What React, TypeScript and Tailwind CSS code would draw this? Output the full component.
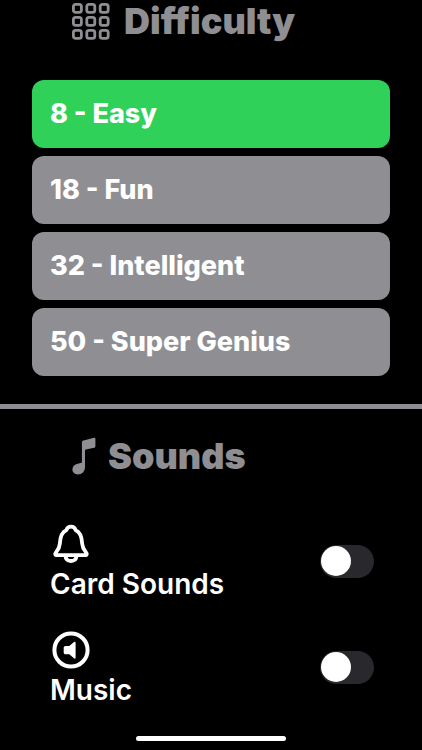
import React, { useState } from 'react';

const LEVELS = [
    { pairs: 8, name: 'Easy' },
    { pairs: 18, name: 'Fun' },
    { pairs: 32, name: 'Intelligent' },
    { pairs: 50, name: 'Super Genius' },
];

const GRID_STEPS = [0, 13, 26];

const GridIcon: React.FC = () => (
    <svg width="38" height="37" viewBox="0 0 38 37" fill="none" stroke="currentColor" strokeWidth="2.8" aria-hidden="true">
        {GRID_STEPS.map((y) =>
            GRID_STEPS.map((x) => (
                <rect key={`${x}-${y}`} x={x * 1.03 + 1.4} y={y + 1.4} width="8" height="8" rx="2.2" />
            ))
        )}
    </svg>
);

const NoteIcon: React.FC = () => (
    <svg width="24" height="38" viewBox="0 0 24 38" fill="currentColor" aria-hidden="true">
        <path d="M22 .7c.8-.2 1.4.3 1.4 1.1v7.4c0 .8-.5 1.4-1.3 1.6l-8.2 1.8c-.6.1-.9.5-.9 1.1V30c0 4.5-3 7.4-7.2 7.4C2.6 37.4.4 35.4.4 32.5c0-3 2-5.1 5.4-5.8l2.6-.6c1-.2 1.500-.7 1.500-1.7V5.300c0-1 .6-1.7 1.6-1.9z" />
    </svg>
);

const BellIcon: React.FC = () => (
    <svg width="38" height="40" viewBox="0 0 38 40" fill="none" stroke="currentColor" strokeWidth="3.8" strokeLinejoin="round" aria-hidden="true">
        <path d="M4.6 31.200h28.800c1.300 0 1.800-1.200 1-2.200-2.300-2.900-3.900-4.600-4.200-9.200-.4-7.500-1.900-11.800-6.500-13.600C23 3.900 21.300 2.600 19 2.600s-4 1.300-4.700 3.600C9.700 8 8.200 12.300 7.800 19.800 7.500 24.400 5.900 26.100 3.600 29c-.8 1-.3 2.200 1 2.200z" />
        <path d="M13.400 31.500c.2 3.500 2.400 5.500 5.600 5.500s5.400-2 5.600-5.500" />
    </svg>
);

const SpeakerIcon: React.FC = () => (
    <svg width="38" height="38" viewBox="0 0 38 38" aria-hidden="true">
        <circle cx="19" cy="19" r="16.6" fill="none" stroke="currentColor" strokeWidth="4" />
        <path d="M22 11c.8-.6 1.600-.3 1.600.7v15c0 1-.8 1.300-1.600.6l-4.700-4.100h-3.700c-1.200 0-1.900-.7-1.900-1.800v-4.500c0-1.100.7-1.800 1.900-1.800h3.700z" fill="currentColor" />
    </svg>
);

interface ToggleRowProps {
    id: string;
    label: string;
    icon: React.ReactNode;
    checked: boolean;
    onChange: (value: boolean) => void;
}

const ToggleRow: React.FC<ToggleRowProps> = ({ id, label, icon, checked, onChange }) => (
    <div className="flex items-center justify-between">
        <label htmlFor={id} className="flex flex-col text-[28px] leading-10 font-semibold text-white">
            <span className="ml-0.5 flex h-10 items-center">{icon}</span>
            {label}
        </label>
        <input
            id={id}
            type="checkbox"
            role="switch"
            checked={checked}
            onChange={(e) => onChange(e.target.checked)}
            className="mb-1.5 flex h-[33px] w-[54px] shrink-0 cursor-pointer appearance-none items-center rounded-full bg-[#29282d] p-px before:block before:size-[30px] before:rounded-full before:bg-white before:transition-transform checked:bg-[#30d158] checked:before:translate-x-5"
        />
    </div>
);

export default function App() {
    const [level, setLevel] = useState(8);
    const [cardSounds, setCardSounds] = useState(false);
    const [music, setMusic] = useState(false);

    return (
        <main className="flex min-h-screen flex-col bg-black font-['Inter','Liberation_Sans',sans-serif]">
            {/* Difficulty */}
            <section className="px-8 pb-7">
                <h2 className="flex h-[42px] items-center gap-3.5 pl-10 text-[36px] leading-10 font-black text-[#8e8e93]">
                    <GridIcon />
                    Difficulty
                </h2>
                <div className="mt-[38px] flex flex-col gap-2">
                    {LEVELS.map(({ pairs, name }) => (
                        <button
                            key={pairs}
                            type="button"
                            aria-pressed={level === pairs}
                            onClick={() => setLevel(pairs)}
                            className={`h-[68px] cursor-pointer rounded-xl px-[18px] text-left text-[27px] font-extrabold text-white ${
                                level === pairs ? 'bg-[#30d158]' : 'bg-[#8e8e93]'
                            }`}
                        >
                            {pairs} - {name}
                        </button>
                    ))}
                </div>
            </section>

            <hr className="h-[5px] border-0 bg-[#8e8e93]" />

            {/* Sounds */}
            <section className="pt-[27px]">
                <h2 className="flex h-10 items-center gap-3 pl-[72px] text-[36px] leading-10 font-black text-[#8e8e93]">
                    <NoteIcon />
                    Sounds
                </h2>
                <div className="mt-12 flex flex-col gap-[26px] pr-12 pl-[50px]">
                    <ToggleRow id="card-sounds" label="Card Sounds" icon={<BellIcon />} checked={cardSounds} onChange={setCardSounds} />
                    <ToggleRow id="music" label="Music" icon={<SpeakerIcon />} checked={music} onChange={setMusic} />
                </div>
            </section>

            {/* Home indicator */}
            <div className="mt-auto flex justify-center pt-4 pb-[9px]">
                <div className="h-[5px] w-[150px] rounded-full bg-white" />
            </div>
        </main>
    );
}
